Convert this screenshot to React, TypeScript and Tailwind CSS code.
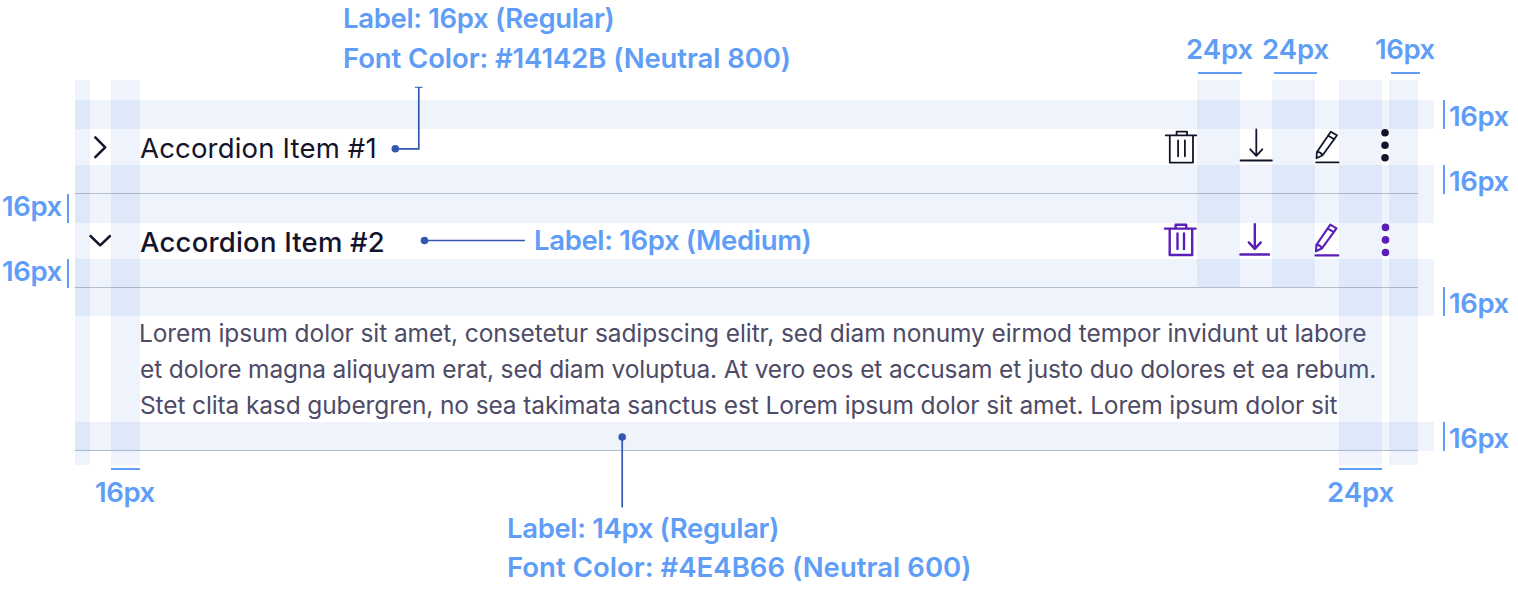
import type { ReactNode } from "react";

const GUIDES = [
  // columns
  "left-[75px] top-[80px] w-[14.5px] h-[385px]",
  "left-[111px] top-[80px] w-[29px] h-[385px]",
  "left-[1196.5px] top-[80px] w-[43px] h-[207px]",
  "left-[1272px] top-[80px] w-[43px] h-[207px]",
  "left-[1339px] top-[80px] w-[43px] h-[385px]",
  "left-[1389px] top-[80px] w-[29px] h-[385px]",
  // rows
  "left-[75px] top-[100px] w-[1359px] h-[29px]",
  "left-[75px] top-[165px] w-[1359px] h-[57.5px]",
  "left-[75px] top-[259px] w-[1359px] h-[57px]",
  "left-[75px] top-[422px] w-[1359px] h-[29px]",
];

const MEASURES = [
  "left-[1198px] top-[72px] w-[43.5px] h-[2px]",
  "left-[1274px] top-[72px] w-[43px] h-[2px]",
  "left-[1391px] top-[72px] w-[29px] h-[2px]",
  "left-[1443px] top-[100px] w-[2px] h-[29px]",
  "left-[1443px] top-[165px] w-[2px] h-[29px]",
  "left-[1443px] top-[287px] w-[2px] h-[29px]",
  "left-[1443px] top-[422px] w-[2px] h-[29px]",
  "left-[67px] top-[194px] w-[2px] h-[28.5px]",
  "left-[67px] top-[259px] w-[2px] h-[28.5px]",
  "left-[111px] top-[468px] w-[29px] h-[2px]",
  "left-[1339px] top-[468px] w-[43px] h-[2px]",
];

const NOTES: { text: string; place: string }[] = [
  { text: "24px", place: "left-[1186px] top-[29px]" },
  { text: "24px", place: "left-[1262px] top-[29px]" },
  { text: "16px", place: "left-[1375px] top-[29px] tracking-[-0.4px]" },
  { text: "16px", place: "left-[1449px] top-[96px] tracking-[-0.4px]" },
  { text: "16px", place: "left-[1449px] top-[161px] tracking-[-0.4px]" },
  { text: "16px", place: "left-[1449px] top-[283px] tracking-[-0.4px]" },
  { text: "16px", place: "left-[1449px] top-[418px] tracking-[-0.4px]" },
  { text: "16px", place: "left-[2px] top-[186px] tracking-[-0.4px]" },
  { text: "16px", place: "left-[2px] top-[251px] tracking-[-0.4px]" },
  { text: "16px", place: "left-[95px] top-[472px] tracking-[-0.4px]" },
  { text: "24px", place: "left-[1327px] top-[472px]" },
  { text: "Label: 16px (Regular)", place: "left-[343px] top-[-2px] tracking-[-0.34px]" },
  { text: "Font Color: #14142B (Neutral 800)", place: "left-[343px] top-[38px] tracking-[-0.09px]" },
  { text: "Label: 16px (Medium)", place: "left-[534px] top-[220px] tracking-[-0.35px]" },
  { text: "Label: 14px (Regular)", place: "left-[507px] top-[508px] tracking-[-0.35px]" },
  { text: "Font Color: #4E4B66 (Neutral 600)", place: "left-[507px] top-[547px] tracking-[0.04px]" },
];

function ActionIcons({ active }: { active: boolean }) {
  const stroke = active ? 2.4 : 1.8;
  const common = {
    fill: "none",
    stroke: "currentColor",
    strokeWidth: stroke,
    strokeLinecap: "round" as const,
    strokeLinejoin: "round" as const,
    height: 36,
  };
  return (
    <div className={active ? "flex items-center text-[#5a1fb8]" : "flex items-center text-[#14142b]"}>
      <svg {...common} width="32" viewBox="0 0 32 36" className="mr-[43px] overflow-visible">
        {active ? (
          <path d="M0 5.6H30.6M10.6 5.6V1.8H21.2V5.6M4.7 5.6V32H27.2V5.6M12.5 10.4V26M19 10.4V26" />
        ) : (
          <path d="M0.7 6.4H31.3M11.6 6.4V2.6H22V6.4M4.8 6.4V33.6H28V6.4M13.1 11.5V27.3M19.9 11.5V27.3" />
        )}
      </svg>
      <svg {...common} width="32" viewBox="0 0 32 36" className="mr-[43px] overflow-visible">
        {active ? (
          <path d="M14.8 1.2V25.5M8.8 19.4L14.8 25.9L20.8 19.4M0.4 31.5H29" />
        ) : (
          <path d="M16.3 0.5V26.6M10.3 20.3L16.3 26.8L22.3 20.3M0.6 31.5H31.9" />
        )}
      </svg>
      <svg {...common} width="24" viewBox="0 0 24 36" className="mr-[42.5px] overflow-visible">
        <g transform={active ? "translate(-0.5 -1)" : undefined}>
          <path
            strokeWidth={active ? 2.1 : 1.8}
            d="M1.5 29.2L1.9 22.9L15.8 2.7L22 6.3L7.6 26.2L1.5 29.2ZM13.2 6.7L19.4 10.2M1.9 22.9C4.2 22.5 6.1 24 7.6 26.2"
          />
          <path d={active ? "M1.2 33.4H23.6" : "M1.2 33.4H23.6"} />
        </g>
      </svg>
      <svg width="8" height="36" viewBox="0 0 8 36" className="overflow-visible" fill="currentColor">
        <g transform={active ? "translate(0.7 0.7)" : "translate(0.2 0)"}>
          <circle cx="3.8" cy="3.7" r="3.8" />
          <circle cx="3.8" cy="16.2" r="3.8" />
          <circle cx="3.8" cy="28.8" r="3.8" />
        </g>
      </svg>
    </div>
  );
}

function AccordionItem({ title, open, children }: { title: string; open: boolean; children?: ReactNode }) {
  return (
    <section>
      <button
        className="flex h-[94px] w-full items-center border-b border-[#c0c3cd] pr-[29px] pl-[14px] text-left"
        aria-expanded={open}
      >
        <svg
          width="22"
          height="36"
          viewBox="0 0 22 36"
          fill="none"
          stroke="#14142b"
          strokeWidth="2.5"
          strokeLinecap="round"
          strokeLinejoin="round"
        >
          <path d={open ? "M1.5 13L11.2 22.3L21 13" : "M6.3 8.4L16.2 18.3L6.3 28.2"} />
        </svg>
        <span
          className={
            open
              ? "ml-[29px] grow pt-[2px] text-[27.5px] leading-9 font-medium tracking-[0.2px] text-[#14142b]"
              : "ml-[29px] grow pt-[3px] text-[27.5px] leading-9 font-normal tracking-[0.18px] text-[#14142b]"
          }
        >
          {title}
        </span>
        <ActionIcons active={open} />
      </button>
      {children}
    </section>
  );
}

export default function App() {
  return (
    <div className="relative h-[590px] w-[1518px] overflow-hidden bg-white font-['Inter',sans-serif]">
      <main className="ml-[75px] w-[1343px] pt-[100px]">
        <AccordionItem title="Accordion Item #1" open={false} />
        <AccordionItem title="Accordion Item #2" open>
          <div className="flex h-[163px] flex-col border-b border-[#c0c3cd] pt-[27px] pl-[64px] text-[24.5px] leading-9 whitespace-nowrap text-[#4e4b66]">
            <span className="tracking-[-0.09px]">
              Lorem ipsum dolor sit amet, consetetur sadipscing elitr, sed diam nonumy eirmod tempor invidunt ut labore
            </span>
            <span className="pl-px tracking-[-0.14px]">
              et dolore magna aliquyam erat, sed diam voluptua. At vero eos et accusam et justo duo dolores et ea rebum.
            </span>
            <span className="pl-px tracking-[-0.13px]">
              Stet clita kasd gubergren, no sea takimata sanctus est Lorem ipsum dolor sit amet. Lorem ipsum dolor sit
            </span>
          </div>
        </AccordionItem>
      </main>

      {GUIDES.map((place) => (
        <div key={place} className={`absolute bg-[#5587e1]/10 ${place}`} />
      ))}
      {MEASURES.map((place) => (
        <div key={place} className={`absolute bg-[#609df6] ${place}`} />
      ))}
      {NOTES.map(({ text, place }) => (
        <span
          key={place}
          className={`absolute text-[27.5px] leading-10 font-semibold whitespace-nowrap text-[#609df6] ${place}`}
        >
          {text}
        </span>
      ))}

      <svg
        className="pointer-events-none absolute inset-0"
        width="1518"
        height="590"
        fill="none"
        stroke="#3457b2"
        strokeWidth="1.7"
      >
        <path d="M395.3 148.8H418.8V87.3" />
        <path d="M415 87.3H422.6" strokeWidth="1" />
        <path d="M424.5 240.5H525" />
        <path d="M622.2 437V507.5" />
        <g fill="#3457b2" stroke="none">
          <circle cx="395.3" cy="148.8" r="3.8" />
          <circle cx="424.5" cy="240.5" r="3.8" />
          <circle cx="622.2" cy="437" r="3.8" />
        </g>
      </svg>
    </div>
  );
}
